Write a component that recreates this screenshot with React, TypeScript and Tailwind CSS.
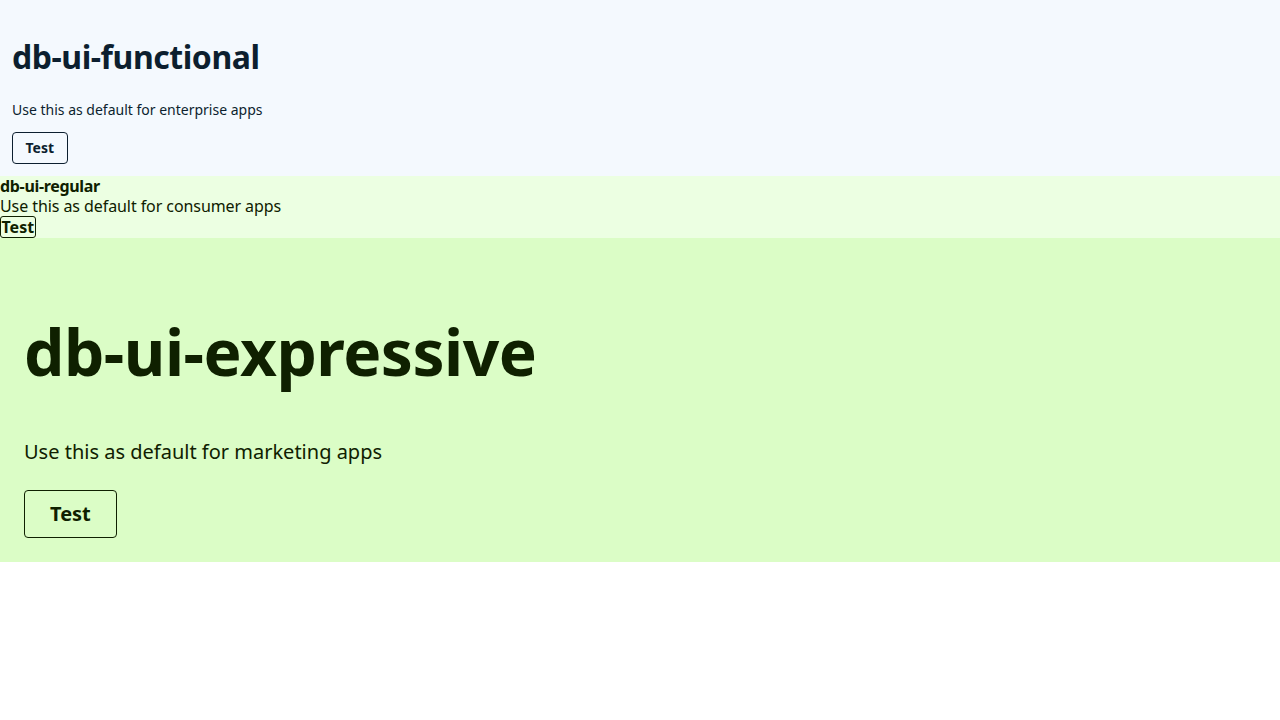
import React from "react";

const font = { fontFamily: '"Noto Sans", "Open Sans", sans-serif' };

export default function App() {
  return (
    <div className="w-full bg-white" style={font}>
      {/* functional */}
      <section className="bg-[#f4f9fe] text-[#0c1f2f] px-3 pt-3 pb-3 flex flex-col items-start">
        <h1 className="mt-[25px] text-[32px] leading-[40px] font-bold tracking-[-0.014em]">
          db-ui-functional
        </h1>
        <p className="mt-[23px] text-[14px] leading-[20px]">
          Use this as default for enterprise apps
        </p>
        <button className="mt-3 h-8 px-[12.5px] border border-[#0c1f2f] rounded-[4px] text-[14px] leading-[20px] font-bold">
          Test
        </button>
      </section>

      {/* regular */}
      <section className="bg-[#ecffe2] text-[#0f2000] flex flex-col items-start">
        <h2 className="text-[16px] leading-[20px] font-bold tracking-[-0.02em]">db-ui-regular</h2>
        <p className="text-[16px] leading-[20px] tracking-[-0.005em]">Use this as default for consumer apps</p>
        <button className="px-[0.5px] border border-[#0f2000] rounded-[3px] text-[16px] leading-[20px] font-bold">
          Test
        </button>
      </section>

      {/* expressive */}
      <section className="bg-[#dbfdc6] text-[#0f2000] p-6 flex flex-col items-start">
        <h1 className="mt-[50px] text-[64px] leading-[80px] font-bold tracking-[-0.008em]">
          db-ui-expressive
        </h1>
        <p className="mt-[46px] text-[20px] leading-[28px]">
          Use this as default for marketing apps
        </p>
        <button className="mt-6 h-12 px-[25px] border border-[#0f2000] rounded-[4px] text-[20px] leading-[28px] font-bold">
          Test
        </button>
      </section>
    </div>
  );
}
